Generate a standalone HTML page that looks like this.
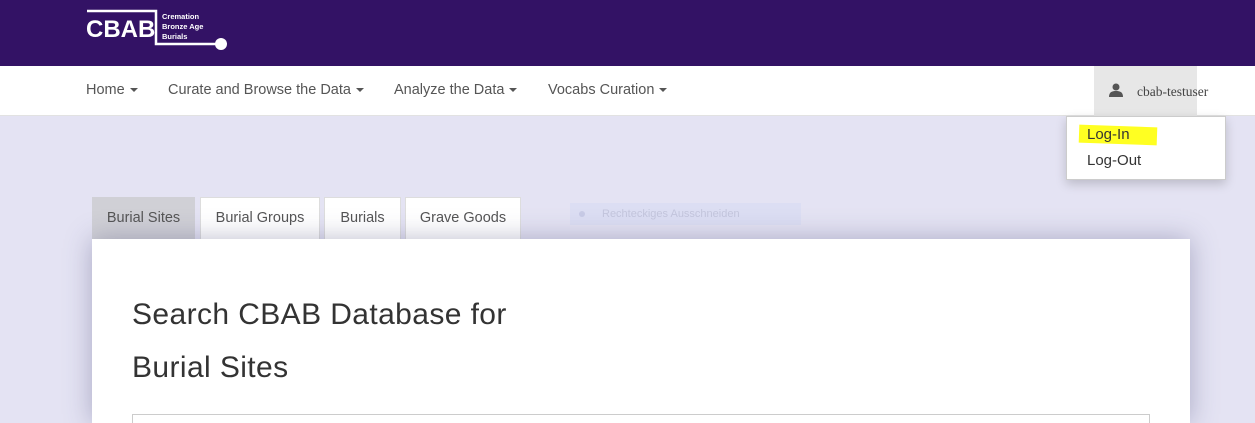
<!DOCTYPE html>
<html style="overflow:hidden"><head><style>
*{margin:0;padding:0;box-sizing:border-box}
html,body{width:1255px;height:423px;overflow:hidden}
body{background:#e4e3f3;font-family:"Liberation Sans",sans-serif;position:relative}
.top{position:absolute;left:0;top:0;width:1255px;height:66px;background:#331265}
.nav{position:absolute;left:0;top:66px;width:1255px;height:50px;background:#fff;border-bottom:1px solid #e2e2e2}
.nav span{position:absolute;top:16px;font-size:14.5px;color:#555;white-space:nowrap}
.caret{display:inline-block;border-left:4px solid transparent;border-right:4px solid transparent;border-top:4px solid #555;vertical-align:middle;margin-left:5px}
.user{position:absolute;left:1094px;top:0;width:103px;height:50px;background:#e7e7e7}
.dd{position:absolute;left:1066px;top:116px;width:160px;height:64px;background:#fff;border:1px solid #ccc;box-shadow:0 4px 10px rgba(0,0,0,.18);font-size:15px;color:#333}
.tab{position:absolute;top:197px;height:42px;background:#fff;border:1px solid #ddd;border-bottom:none;font-size:14.5px;color:#555;text-align:center;line-height:40px}
.card{position:absolute;left:92px;top:239px;width:1098px;height:184px;background:#fff;box-shadow:0 0 25px rgba(60,60,110,.35)}
h1{position:absolute;left:40px;font-weight:normal;font-size:30px;letter-spacing:0.4px;color:#333;white-space:nowrap}
</style></head><body>
<div class="top">
<svg width="160" height="56" style="position:absolute;left:84px;top:0">
<path d="M3 11H72V44H142" stroke="#fff" stroke-width="2.5" fill="none"/>
<circle cx="137" cy="44" r="6" fill="#fff"/>
<text x="2" y="37" font-family="Liberation Sans" font-weight="bold" font-size="24" fill="#fff">CBAB</text>
<text x="78" y="19" font-family="Liberation Sans" font-weight="bold" font-size="7.5" fill="#fff">Cremation</text>
<text x="78" y="29" font-family="Liberation Sans" font-weight="bold" font-size="7.5" fill="#fff">Bronze Age</text>
<text x="78" y="39" font-family="Liberation Sans" font-weight="bold" font-size="7.5" fill="#fff">Burials</text>
</svg>
</div>
<div class="nav">
<span style="left:86px">Home<i class="caret"></i></span>
<span style="left:168px">Curate and Browse the Data<i class="caret"></i></span>
<span style="left:394px">Analyze the Data<i class="caret"></i></span>
<span style="left:548px">Vocabs Curation<i class="caret"></i></span>
<div class="user">
<svg width="14" height="14" style="position:absolute;left:15px;top:17px"><circle cx="7" cy="4" r="3.5" fill="#555"/><path d="M0 14C0 9 3 8 7 8S14 9 14 14Z" fill="#555"/></svg>
<span style="left:43px;top:18px;font-family:'Liberation Serif',serif;font-size:13.5px;color:#444">cbab-testuser</span>
</div>
</div>
<div class="dd">
<div style="position:absolute;left:12px;top:9px;width:78px;height:18px;background:#ffff22;transform:rotate(2deg)"></div>
<div style="position:absolute;left:20px;top:9px">Log-In</div>
<div style="position:absolute;left:20px;top:35px">Log-Out</div>
</div>
<div class="tab" style="left:92px;width:103px;background:#d0d0d6;border-color:#d0d0d6">Burial Sites</div>
<div class="tab" style="left:200px;width:120px">Burial Groups</div>
<div class="tab" style="left:324px;width:77px">Burials</div>
<div class="tab" style="left:405px;width:116px">Grave Goods</div>
<div style="position:absolute;left:570px;top:203px;width:231px;height:22px;background:#dcdef3;font-size:11px;color:#c4c6dd;line-height:22px;padding-left:32px;white-space:nowrap">Rechteckiges Ausschneiden<i style="position:absolute;left:9px;top:8px;width:6px;height:6px;border-radius:3px;background:#c8cbe6"></i></div>
<div class="card">
<h1 style="top:59px">Search CBAB Database for</h1>
<h1 style="top:112px">Burial Sites</h1>
<div style="position:absolute;left:40px;top:175px;width:1018px;height:9px;border:1px solid #ccc;border-bottom:none"></div>
</div>
</body></html>
